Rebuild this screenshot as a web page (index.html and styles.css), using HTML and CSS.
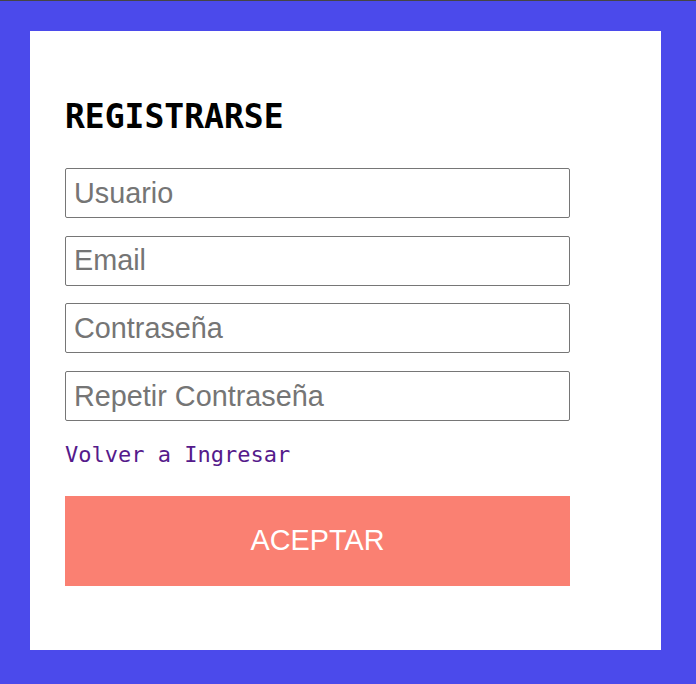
FILE: index.html
```html
<!DOCTYPE html>
<html lang="es">
<head>
<meta charset="utf-8">
<title>Registrarse</title>
<link rel="stylesheet" href="styles.css">
</head>
<body>
<main class="card">
  <h1 class="title">REGISTRARSE</h1>
  <form class="form">
    <input class="field" type="text" placeholder="Usuario">
    <input class="field" type="email" placeholder="Email">
    <input class="field" type="password" placeholder="Contraseña">
    <input class="field" type="password" placeholder="Repetir Contraseña">
    <a class="link" href="#">Volver a Ingresar</a>
    <button class="btn" type="button">ACEPTAR</button>
  </form>
</main>
</body>
</html>
```

FILE: styles.css
```css
html, body {
  margin: 0;
  height: 100%;
}
body {
  box-sizing: border-box;
  background: #4b4aeb;
  border-top: 1px solid #454545;
  padding: 30px 35px 34px 30px;
}
.card {
  box-sizing: border-box;
  background: #fff;
  height: 619px;
  padding: 46px 35px 0 35px;
}
.title {
  margin: 21px 0 33px;
  font-family: "DejaVu Sans Mono", monospace;
  font-weight: bold;
  font-size: 33px;
  line-height: 37px;
  color: #000;
}
.form {
  display: flex;
  flex-direction: column;
  width: 505px;
}
.field {
  box-sizing: border-box;
  height: 50px;
  margin: 0 0 17.7px;
  padding: 0 8px;
  border: 1px solid #767676;
  border-radius: 2px;
  font-family: "Liberation Sans", Arial, sans-serif;
  font-size: 28.8px;
  color: #000;
  background: #fff;
}
.field::placeholder {
  color: #757575;
}
.link {
  align-self: flex-start;
  margin-top: 3px;
  font-family: "DejaVu Sans Mono", monospace;
  font-size: 22px;
  line-height: 26px;
  color: #551a8b;
  text-decoration: none;
}
.btn {
  margin-top: 28px;
  height: 90px;
  border: none;
  background: #fa8072;
  color: #fff;
  font-family: "Liberation Sans", Arial, sans-serif;
  font-size: 28.8px;
  cursor: pointer;
}
```
